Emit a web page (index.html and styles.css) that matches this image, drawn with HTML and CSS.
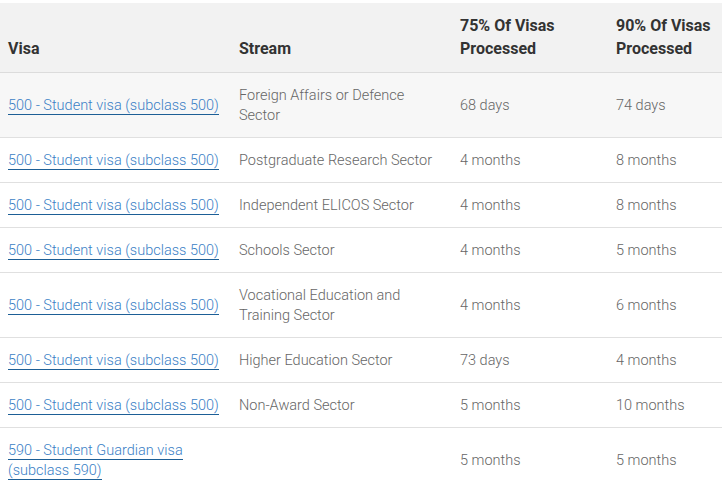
FILE: index.html
```html
<!DOCTYPE html>
<html>
<head>
<meta charset="utf-8">
<link rel="stylesheet" href="styles.css">
</head>
<body>
<table class="times">
  <colgroup>
    <col class="c1"><col class="c2"><col class="c3"><col class="c4">
  </colgroup>
  <thead>
    <tr><th>Visa</th><th>Stream</th><th>75% Of Visas Processed</th><th>90% Of Visas Processed</th></tr>
  </thead>
  <tbody>
    <tr class="alt"><td><a href="#">500 - Student visa (subclass 500)</a></td><td>Foreign Affairs or Defence Sector</td><td>68 days</td><td>74 days</td></tr>
    <tr><td><a href="#">500 - Student visa (subclass 500)</a></td><td>Postgraduate Research Sector</td><td>4 months</td><td>8 months</td></tr>
    <tr><td><a href="#">500 - Student visa (subclass 500)</a></td><td>Independent ELICOS Sector</td><td>4 months</td><td>8 months</td></tr>
    <tr><td><a href="#">500 - Student visa (subclass 500)</a></td><td>Schools Sector</td><td>4 months</td><td>5 months</td></tr>
    <tr><td><a href="#">500 - Student visa (subclass 500)</a></td><td>Vocational Education and Training Sector</td><td>4 months</td><td>6 months</td></tr>
    <tr><td><a href="#">500 - Student visa (subclass 500)</a></td><td>Higher Education Sector</td><td>73 days</td><td>4 months</td></tr>
    <tr><td><a href="#">500 - Student visa (subclass 500)</a></td><td>Non-Award Sector</td><td>5 months</td><td>10 months</td></tr>
    <tr><td><a href="#">590 - Student Guardian visa (subclass 590)</a></td><td></td><td>5 months</td><td>5 months</td></tr>
  </tbody>
</table>
</body>
</html>
```
FILE: styles.css
```css
html, body {
  margin: 0;
  padding: 0;
  background: #fff;
}
body {
  padding-top: 3px;
  font-family: Roboto, "Liberation Sans", sans-serif;
}
.times {
  border-collapse: collapse;
  width: 722px;
  table-layout: fixed;
}
.c1 { width: 231px; }
.c2 { width: 221px; }
.c3 { width: 156px; }
.c4 { width: 114px; }
.times th {
  background: #f2f2f2;
  color: #333;
  font-weight: 700;
  font-size: 16px;
  line-height: 23px;
  text-align: left;
  vertical-align: bottom;
  padding: 11px 8px 12px;
  border-bottom: 1px solid #dcdcdc;
}
.times td {
  color: #666;
  font-weight: 300;
  font-size: 14.5px;
  line-height: 20px;
  padding: 13px 8px 11px;
  vertical-align: middle;
  border-bottom: 1px solid #e0e0e0;
}
.times tr.alt td {
  background: #f7f7f7;
}
.times a {
  color: #3b7fc6;
  text-decoration: none;
  border-bottom: 1px solid #1d5f96;
}
```
